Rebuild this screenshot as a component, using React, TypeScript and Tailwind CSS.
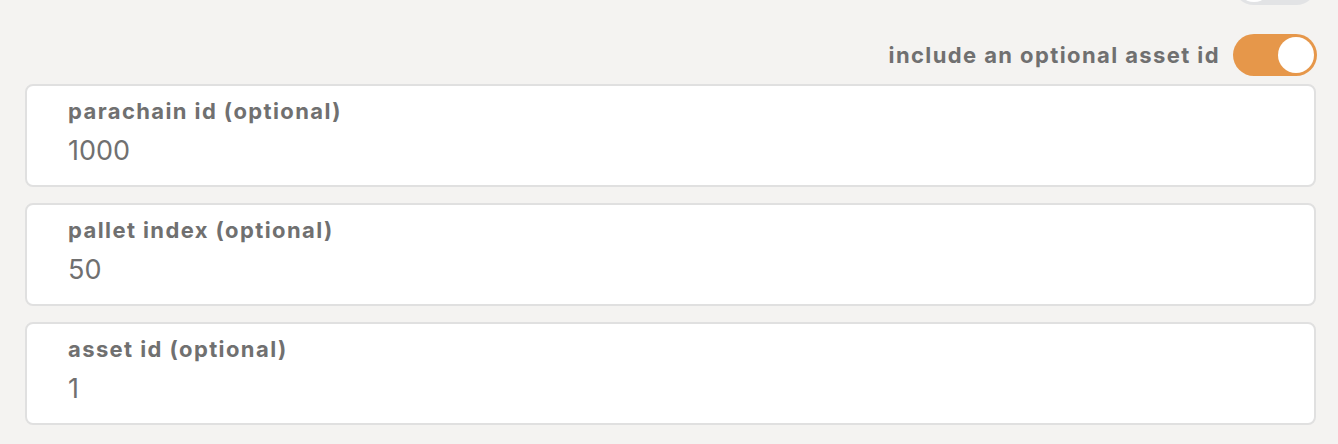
import React from "react";

function Toggle({ on }: { on: boolean }) {
  return (
    <div
      className={
        "relative h-[42px] w-[84px] shrink-0 rounded-full " +
        (on ? "bg-[#e6974a]" : "bg-[#e2e3e5]")
      }
    >
      <div
        className={
          "absolute top-[3px] h-[36px] w-[36px] rounded-full bg-white " +
          (on ? "right-[3px]" : "left-[3px]")
        }
      />
    </div>
  );
}

function Field({ label, value }: { label: string; value: string }) {
  return (
    <div className="flex h-[103px] flex-col rounded-[8px] border-2 border-[#e0e0e0] bg-white pl-[41px] pt-[12px]">
      <div className="text-[22px] font-bold leading-[26px] tracking-[1.4px] text-[#707070]">{label}</div>
      <div className="mt-[11px] text-[27px] leading-[32px] text-[#707070]">{value}</div>
    </div>
  );
}

export default function App() {
  return (
    <div
      className="h-[444px] w-full overflow-hidden bg-[#f4f3f1]"
      style={{ fontFamily: "Inter, 'Noto Sans', sans-serif" }}
    >
      <div className="flex justify-end pr-[21px] mt-[-37px]">
        <Toggle on={false} />
      </div>
      <div className="mt-[29px] flex items-center justify-end gap-[13px] pr-[21px]">
        <span className="text-[22px] font-bold tracking-[1.4px] text-[#707070]">include an optional asset id</span>
        <Toggle on={true} />
      </div>
      <div className="mt-[8px] flex flex-col gap-[16px] pl-[25px] pr-[22px]">
        <Field label="parachain id (optional)" value="1000" />
        <Field label="pallet index (optional)" value="50" />
        <Field label="asset id (optional)" value="1" />
      </div>
    </div>
  );
}
